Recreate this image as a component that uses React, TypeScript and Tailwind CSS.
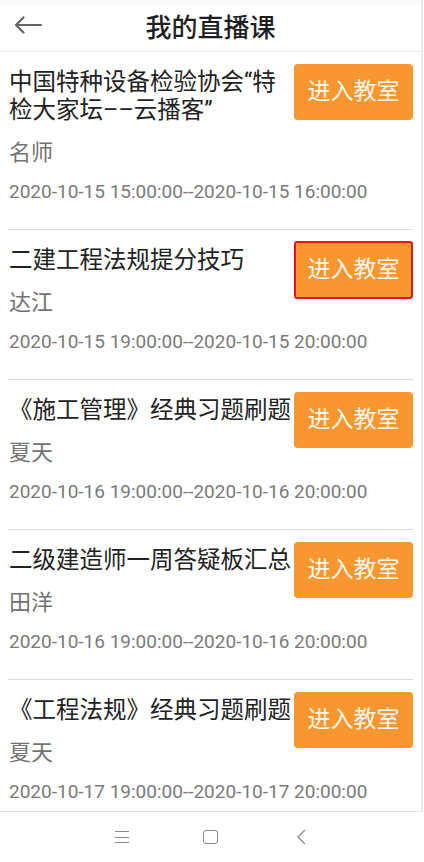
import React from "react";

type Course = {
  title: string;
  teacher: string;
  time: string;
  focused?: boolean;
};

const courses: Course[] = [
  {
    title: "中国特种设备检验协会“特检大家坛––云播客”",
    teacher: "名师",
    time: "2020-10-15 15:00:00--2020-10-15 16:00:00",
  },
  {
    title: "二建工程法规提分技巧",
    teacher: "达江",
    time: "2020-10-15 19:00:00--2020-10-15 20:00:00",
    focused: true,
  },
  {
    title: "《施工管理》经典习题刷题",
    teacher: "夏天",
    time: "2020-10-16 19:00:00--2020-10-16 20:00:00",
  },
  {
    title: "二级建造师一周答疑板汇总",
    teacher: "田洋",
    time: "2020-10-16 19:00:00--2020-10-16 20:00:00",
  },
  {
    title: "《工程法规》经典习题刷题",
    teacher: "夏天",
    time: "2020-10-17 19:00:00--2020-10-17 20:00:00",
  },
];

function BackArrow() {
  return (
    <svg width="28" height="18" viewBox="0 0 28 18" fill="none">
      <path
        d="M27 9H2.5M9.5 1.5L2 9l7.5 7.5"
        stroke="#666"
        strokeWidth="2.2"
        strokeLinecap="round"
        strokeLinejoin="round"
      />
    </svg>
  );
}

function CourseRow({ course }: { course: Course }) {
  return (
    <div className="grid grid-cols-[1fr_119px] border-b border-[#dcdcdc] pb-[24px]">
      <div className="min-w-0 pl-px pt-[16px]">
        <p className="text-[23.5px] leading-[28px] text-[#222]">{course.title}</p>
        <p className="mt-[14px] text-[22px] leading-[30px] text-[#727272]">{course.teacher}</p>
      </div>
      <button
        className={
          course.focused
            ? "mt-[11px] flex h-[58px] w-[119px] items-center justify-center self-start rounded-[3px] border-2 border-[#e4161f] bg-[#f8972f] text-[23px] text-[#fff7ee]"
            : "mt-[12px] flex h-[56px] w-[119px] items-center justify-center self-start rounded-[4px] bg-[#f8972f] text-[23px] text-[#fff7ee]"
        }
      >
        进入教室
      </button>
      <p className="col-span-2 mt-[11px] whitespace-nowrap pl-px font-['Roboto'] text-[19px] leading-[26px] text-[#7a7a7a]">
        {course.time}
      </p>
    </div>
  );
}

export default function App() {
  return (
    <div className="flex h-[862px] w-[424px] flex-col overflow-hidden bg-white font-['Roboto','Noto_Sans_CJK_SC',sans-serif]">
      <div className="mr-[1px] flex flex-1 flex-col overflow-hidden border-r-2 border-[#ececec]">
        <header className="relative flex h-[52px] shrink-0 items-center justify-center border-t-[5px] border-b border-t-[#fafafa] border-b-[#efefef]">
          <span className="absolute left-[14px] top-[11px]">
            <BackArrow />
          </span>
          <h1 className="text-[26px] font-medium leading-none text-[#1f1f1f]">我的直播课</h1>
        </header>
        <div className="flex-1 overflow-hidden px-2">
          {courses.map((c, i) => (
            <CourseRow key={i} course={c} />
          ))}
        </div>
      </div>
      <nav className="flex h-[51px] shrink-0 items-center border-t border-[#e6e6e6] bg-white">
        <div className="flex w-full items-center">
          <div className="ml-[115px] flex h-[14px] w-[14px] flex-col justify-between py-px">
            <span className="h-px w-full bg-[#8a8a8a]" />
            <span className="h-px w-full bg-[#8a8a8a]" />
            <span className="h-px w-full bg-[#8a8a8a]" />
          </div>
          <div className="ml-[74px] h-[14px] w-[15px] rounded-[3px] border-[1.5px] border-[#8a8a8a]" />
          <svg className="ml-[78px]" width="10" height="16" viewBox="0 0 10 16" fill="none">
            <path d="M8.5 1.5L2 8l6.5 6.5" stroke="#8a8a8a" strokeWidth="1.3" strokeLinecap="round" />
          </svg>
        </div>
      </nav>
    </div>
  );
}
